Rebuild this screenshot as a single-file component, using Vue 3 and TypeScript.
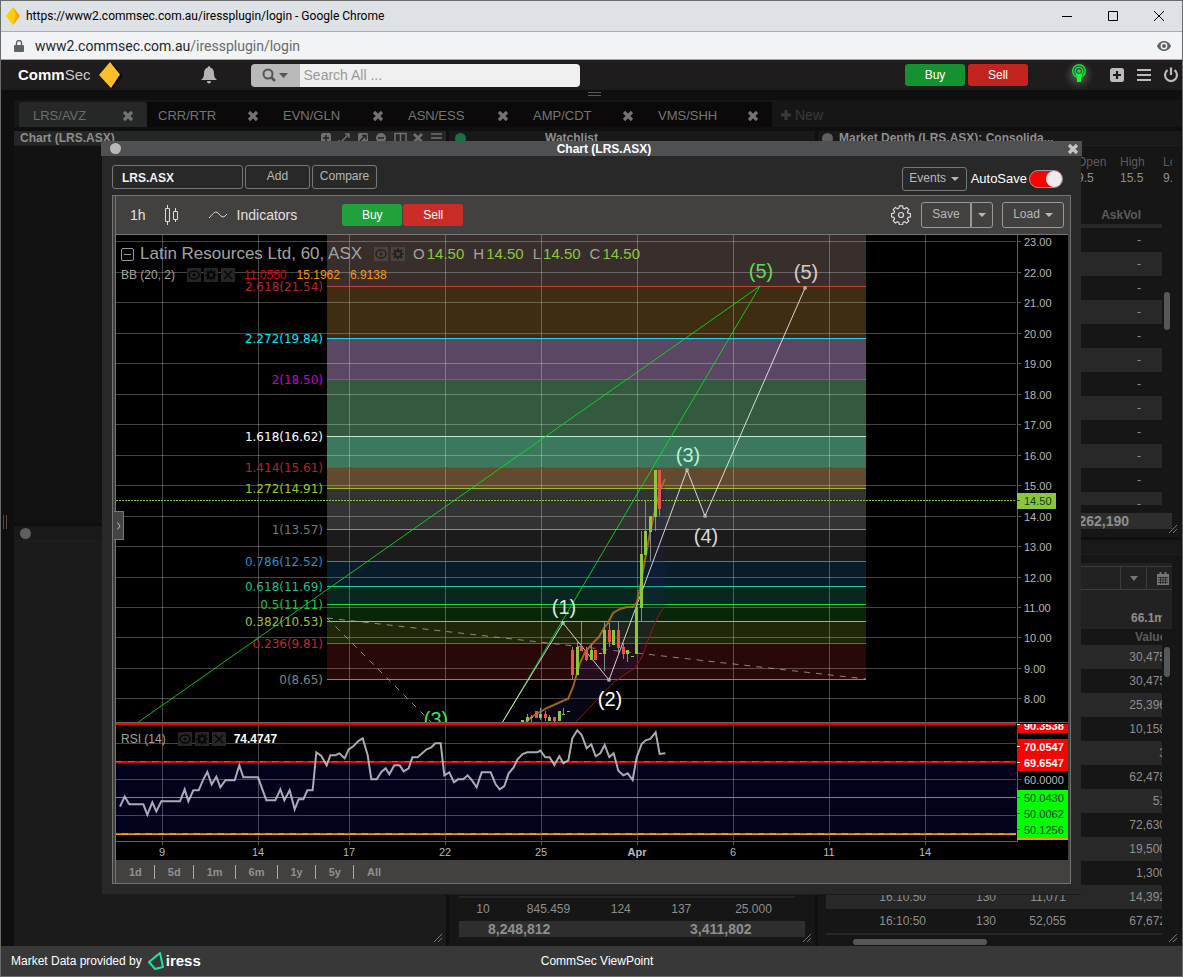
<script setup lang="ts">
import { ref } from 'vue'

interface Level { label: string; y: number; fill: string; line: string; text: string }
interface Candle { x: number; top: number; bottom: number; high: number; low: number; up: boolean }
interface Mark { label: string; x: number; y: number; color: string }

const symbol = ref('LRS.ASX')
const query = ref('')
const autoSave = ref(true)

const tabs = ['LRS/AVZ', 'CRR/RTR', 'EVN/GLN', 'ASN/ESS', 'AMP/CDT', 'VMS/SHH']
const ranges = ['1d', '5d', '1m', '6m', '1y', '5y', 'All']

const depthRows = Array.from({ length: 12 }, () => '-')
const stats = [['Open', '9.5'], ['High', '15.5'], ['Low', '9.5']]
const sales = [
  ['16:10:50', '130', '21,012', '30,475'],
  ['16:10:50', '130', '21,012', '30,475'],
  ['16:10:50', '130', '19,535', '25,396'],
  ['16:10:50', '130', '7,814', '10,158'],
  ['16:10:50', '130', '2', '3'],
  ['16:10:50', '130', '48,060', '62,478'],
  ['16:10:50', '130', '39', '51'],
  ['16:10:50', '130', '55,869', '72,630'],
  ['16:10:50', '130', '15,000', '19,500'],
  ['16:10:50', '130', '1,000', '1,300'],
  ['16:10:50', '130', '11,071', '14,392'],
  ['16:10:50', '130', '52,055', '67,672'],
  ['16:10:50', '130', '1,000', '1,300'],
]
const watchRow = ['10', '845.459', '124', '137', '25.000']
const ohlc = ['O', 'H', 'L', 'C']

const priceTicks = Array.from({ length: 16 }, (_, i) => ({
  label: (23 - i).toFixed(2),
  y: 241 + Math.ceil(30.46 * i),
}))
const dateTicks = [
  { x: 162, label: '9' }, { x: 258, label: '14' }, { x: 349, label: '17' },
  { x: 445, label: '22' }, { x: 541, label: '25' }, { x: 637, label: 'Apr' },
  { x: 733, label: '6' }, { x: 829, label: '11' }, { x: 925, label: '14' },
]
const rsiGrid = [743, 779, 815]

/* Each fill covers the band directly above its level. */
const levels: Level[] = [
  { label: '2.618(21.54)', y: 286, fill: '#382e2b', line: '#cb4238', text: '#b8292b' },
  { label: '2.272(19.84)', y: 338, fill: '#3e2d10', line: '#1ad7ee', text: '#00e8f0' },
  { label: '2(18.50)', y: 379, fill: '#5b4763', line: '#d61fd6', text: '#cc00cc' },
  { label: '1.618(16.62)', y: 436, fill: '#33593f', line: '#b8f0cf', text: '#ffffff' },
  { label: '1.414(15.61)', y: 467, fill: '#3b785e', line: '#b03838', text: '#b22626' },
  { label: '1.272(14.91)', y: 488, fill: '#624a2f', line: '#9bbf22', text: '#98c52c' },
  { label: '1(13.57)', y: 529, fill: '#333333', line: '#8c8c8c', text: '#777777' },
  { label: '0.786(12.52)', y: 561, fill: '#1b1b1b', line: '#2a87c0', text: '#2a8fc4' },
  { label: '0.618(11.69)', y: 586, fill: '#081d29', line: '#22c79a', text: '#23bd92' },
  { label: '0.5(11.11)', y: 604, fill: '#08281f', line: '#27cf3a', text: '#28c636' },
  { label: '0.382(10.53)', y: 621, fill: '#082708', line: '#8fd122', text: '#9ec42c' },
  { label: '0.236(9.81)', y: 643, fill: '#1f2708', line: '#d03a2a', text: '#c02c2c' },
  { label: '0(8.65)', y: 679, fill: '#280908', line: '#8b8080', text: '#808080' },
]
const bandTop = (i: number): number => (i === 0 ? 235 : levels[i - 1].y)

const c = (x: number, top: number, bottom: number, high: number, low: number, up: boolean): Candle =>
  ({ x, top, bottom, high, low, up })
const candles: Candle[] = [
  c(522, 720, 723, 720, 723, true), c(527, 717, 721, 714, 723, true), c(531, 717, 718, 715, 723, true),
  c(536, 711, 718, 711, 718, false), c(540, 714, 718, 708, 720, true), c(545, 714, 718, 711, 721, false),
  c(549, 717, 721, 715, 721, true), c(554, 717, 721, 717, 723, false), c(559, 711, 721, 711, 721, true),
  c(563, 714, 715, 708, 715, true), c(568, 711, 712, 711, 712, true), c(572, 650, 675, 647, 679, false),
  c(577, 647, 675, 641, 675, true), c(581, 647, 651, 622, 651, false), c(586, 650, 660, 647, 661, false),
  c(591, 650, 660, 644, 660, true), c(595, 650, 660, 650, 660, false), c(600, 653, 654, 653, 654, true),
  c(604, 630, 654, 622, 671, true), c(609, 630, 642, 623, 647, false), c(613, 630, 645, 630, 645, true),
  c(618, 630, 648, 622, 653, false), c(623, 647, 654, 643, 659, false), c(627, 650, 654, 650, 662, true),
  c(632, 656, 657, 656, 657, true), c(636, 607, 654, 607, 654, true), c(641, 554, 608, 531, 622, true),
  c(645, 531, 555, 501, 555, true), c(650, 516, 532, 516, 561, true), c(655, 470, 517, 470, 531, true),
  c(659, 470, 509, 470, 516, false),
]
const marks: Mark[] = [
  { label: '(5)', x: 761, y: 278, color: '#62d957' },
  { label: '(5)', x: 806, y: 279, color: '#d6cdca' },
  { label: '(3)', x: 688, y: 462, color: '#b5f2d9' },
  { label: '(4)', x: 706, y: 543, color: '#d8d8d8' },
  { label: '(1)', x: 564, y: 614, color: '#cdeedd' },
  { label: '(2)', x: 610, y: 706, color: '#ffffff' },
  { label: '(3)', x: 436, y: 726, color: '#33ee44' },
]
const knots = [[563, 623], [609, 680], [687, 470], [705, 516], [805, 288]]
const rsiTags = [
  { label: '70.0547', y: 751, cls: 'hot' }, { label: '69.6547', y: 767, cls: 'hot' },
  { label: '60.0000', y: 784, cls: 'axis' }, { label: '50.0430', y: 802, cls: 'cool' },
  { label: '50.0062', y: 818, cls: 'cool' }, { label: '50.1256', y: 834, cls: 'cool' },
]
const rsiPath = '60,710 74,680 88,703 130,703 142,734 157,697 169,724 184,694 240,694 254,658 265,694 280,661 296,661 310,628 322,606 335,643 349,620 361,652 376,631 404,631 418,586 430,622 474,622 499,691 526,691 541,658 553,691 569,661 584,718 596,688 610,688 622,661 638,661 649,547 664,558 680,586 691,556 706,556 718,550 734,565 746,538 760,529 775,513 788,505 803,556 814,628 830,628 844,606 857,595 868,613 883,586 899,586 911,604 926,595 937,562 953,562 980,538 994,532 1006,520 1022,520 1033,616 1048,607 1062,637 1074,628 1090,628 1103,616 1116,631 1130,652 1145,607 1172,607 1187,643 1199,658 1213,648 1226,610 1241,592 1252,569 1268,552 1282,547 1312,547 1321,542 1336,562 1349,562 1363,585 1378,559 1390,580 1405,571 1417,505 1432,481 1445,495 1460,535 1474,523 1487,559 1501,550 1514,525 1528,561 1541,550 1555,602 1570,616 1583,610 1598,630 1610,562 1625,522 1637,511 1651,507 1667,487 1679,552 1696,550'
</script>

<template>
  <div class="window">
    <div class="titlebar">
      <svg class="favicon" viewBox="0 0 16 18"><path d="M8 0 15 9 8 18 1 9z" fill="#f9d100" /><path d="M8 0 15 9 8 18 11 8z" fill="#f5a800" /></svg>
      <span class="caption">https://www2.commsec.com.au/iressplugin/login - Google Chrome</span>
      <button class="winbtn" aria-label="Minimise"><svg viewBox="0 0 12 12"><path d="M1 6.5h10" stroke="#000" /></svg></button>
      <button class="winbtn" aria-label="Maximise"><svg viewBox="0 0 12 12"><path d="M1.500 1.500h9v9h-9z" fill="none" stroke="#000" /></svg></button>
      <button class="winbtn" aria-label="Close window"><svg viewBox="0 0 12 12"><path d="M1 1l10 10M11 1 1 11" stroke="#000" /></svg></button>
    </div>
    <div class="address">
      <svg class="lock" viewBox="0 0 10 12"><path d="M1 5h8q1 0 1 1v5q0 1-1 1H1q-1 0-1-1V6q0-1 1-1z" fill="#5f6368" /><path d="M2.500 5V3a2.500 2.500 0 0 1 5 0v2" fill="none" stroke="#5f6368" stroke-width="1.400" /></svg>
      <span class="url">www2.commsec.com.au<i>/iressplugin/login</i></span>
      <svg class="eye" viewBox="0 0 14 12"><path d="M7 1C3.500 1 1 3.500 0 6c1 2.500 3.500 5 7 5s6-2.500 7-5c-1-2.500-3.500-5-7-5z" fill="#5f6368" /><circle cx="7" cy="6" r="3.400" fill="#f1f3f4" /><circle cx="7" cy="6" r="2" fill="#5f6368" /></svg>
    </div>

    <header class="appbar">
      <span class="brand"><b>Comm</b>Sec</span>
      <svg class="diamond" viewBox="0 0 24 28"><path d="M14 3 24 15 14 28 6 16z" fill="#0c0a0a" /><path d="M11 1 21 13.500 12 27 0 14z" fill="#fdbe2c" /></svg>
      <button class="icon bell" aria-label="Alerts"><svg viewBox="0 0 16 18"><path d="M8 0q1.200 0 1.200 1.600C12 2.400 13 4.500 13 7.500c0 3.500 1 5 3 6.500H0c2-1.500 3-3 3-6.500 0-3 1-5.100 3.800-5.900Q6.800 0 8 0zM6 15h4q0 2.500-2 2.500T6 15z" fill="#b4b4b4" /></svg></button>
      <div class="search">
        <button class="scope" aria-label="Search scope">
          <svg viewBox="0 0 26 14"><circle cx="6" cy="6" r="4.500" fill="none" stroke="#555" stroke-width="2" /><path d="M9 9l4 4" stroke="#555" stroke-width="2.500" /><path d="M17 5h9l-4.500 5z" fill="#555" /></svg>
        </button>
        <input v-model="query" aria-label="Search all" placeholder="Search All ..." />
      </div>
      <div class="trade">
        <button class="buy">Buy</button><button class="sell">Sell</button>
      </div>
      <svg class="bulb" viewBox="0 0 30 30"><defs><radialGradient id="glow"><stop offset="0" stop-color="#777" stop-opacity=".8" /><stop offset="1" stop-color="#555" stop-opacity="0" /></radialGradient></defs><circle cx="15" cy="15" r="15" fill="url(#glow)" /><g fill="none" stroke="#08e838"><circle cx="15" cy="11" r="6.300" stroke-width="1.500" /><circle cx="15" cy="11" r="3.800" stroke-width="1.500" /></g><circle cx="15" cy="11" r="1.800" fill="#08e838" /><path d="M12 14h6l-1 5v3h-4v-3z" fill="#08ff38" /></svg>
      <button class="icon" aria-label="Add widget"><svg viewBox="0 0 16 16"><rect x="1" y="1" width="14" height="14" rx="2.500" fill="#bcbcbc" /><path d="M8 4v8M4 8h8" stroke="#1f1c1d" stroke-width="2.200" /></svg></button>
      <button class="icon" aria-label="Menu"><svg viewBox="0 0 16 16"><path d="M1 3h14M1 8h14M1 13h14" stroke="#bcbcbc" stroke-width="2" /></svg></button>
      <button class="icon" aria-label="Log out"><svg viewBox="0 0 16 16"><path d="M4.500 3.200a6 6 0 1 0 7 0M8 0.500v7.500" fill="none" stroke="#bcbcbc" stroke-width="2.200" /></svg></button>
    </header>

    <main class="workspace">
      <div class="grip"></div>
      <nav class="tabs">
        <div v-for="(tab, i) in tabs" :key="tab" class="tab" :class="{ active: i === 0 }">
          <a href="#">{{ tab }}</a>
          <button class="cross" :aria-label="'Close ' + tab"><svg viewBox="0 0 12 12"><path d="M2 2l8 8M10 2l-8 8" stroke="#737373" stroke-width="3.200" /></svg></button>
        </div>
        <button class="new"><svg viewBox="0 0 12 12"><path d="M6 1v10M1 6h10" stroke="#3a3a3a" stroke-width="3" /></svg>New</button>
      </nav>

      <div class="columns">
        <div class="column left">
          <section class="panel">
            <header class="bar lit">
              <h2>Chart (LRS.ASX)</h2>
              <svg class="tools" viewBox="0 0 122 12" fill="none" stroke="#707070" stroke-width="1.500">
                <rect x="1" y="1" width="10" height="10" rx="2" fill="#707070" stroke="none" /><path d="M6 3v6M3 6h6" stroke="#222" />
                <path d="M20 11l8-8M25 2h4v4M19 8v4h4" /><rect x="38" y="1" width="10" height="10" rx="2" fill="#707070" stroke="none" /><path d="M40 9l5-5M42 3.500h4v4" stroke="#222" />
                <circle cx="61" cy="6" r="5" fill="#707070" stroke="none" /><path d="M58 6h6" stroke="#222" /><path d="M75 1.500h11v10H75zM80.500 1v11" /><path d="M94 2l8 8M102 2l-8 8" stroke-width="2.500" /><path d="M111 2h11M111 6h11M111 10h11" />
              </svg>
            </header>
          </section>
          <section class="panel lower">
            <header class="bar"><span class="dot"></span></header>
            <svg class="resize" viewBox="0 0 10 10"><path d="M1 9l8-8M5 9l4-4" /></svg>
          </section>
        </div>

        <section class="panel watch">
          <header class="bar"><span class="dot green"></span><h2>Watchlist</h2></header>
          <div class="fill"></div>
          <table class="watch-table"><tbody><tr><td v-for="v in watchRow" :key="v">{{ v }}</td></tr></tbody></table>
          <div class="totals"><b>8,248,812</b><b>3,411,802</b></div>
          <svg class="resize" viewBox="0 0 10 10"><path d="M1 9l8-8M5 9l4-4" /></svg>
        </section>

        <div class="column right">
          <section class="panel depth">
            <header class="bar"><span class="dot"></span><h2>Market Depth (LRS.ASX): Consolida...</h2></header>
            <dl class="stats"><div v-for="s in stats" :key="s[0]"><dt>{{ s[0] }}</dt><dd>{{ s[1] }}</dd></div></dl>
            <div class="ask">AskVol</div>
            <div class="scroll">
              <table class="depth-table"><tbody>
                <tr class="sliver"><td></td></tr>
                <tr v-for="(v, i) in depthRows" :key="i"><td>{{ v }}</td></tr>
              </tbody></table>
              <span class="thumb"></span>
            </div>
            <div class="depth-total">262,190</div>
            <svg class="resize" viewBox="0 0 10 10"><path d="M1 9l8-8M5 9l4-4" /></svg>
          </section>
          <section class="panel course">
            <header class="bar"></header>
            <div class="filter">
              <div class="field">
                <button aria-label="Choose filter"><svg viewBox="0 0 8 5"><path d="M0 0h8L4 5z" fill="#777" /></svg></button>
                <button aria-label="Choose date"><svg class="cal" viewBox="0 0 12 13"><path d="M0 2h12v11H0z" fill="#777" /><path d="M1 5.500h10M1 8h10M1 10.500h10M3.500 5v7M6 5v7M8.500 5v7" stroke="#222" stroke-width=".8" /><path d="M3.500 0v3M8.500 0v3" stroke="#777" stroke-width="2" /></svg></button>
              </div>
              <b>66.1m</b>
            </div>
            <div class="value-head">Value</div>
            <div class="scroll">
              <table class="sales"><tbody><tr v-for="(row, i) in sales" :key="i"><td v-for="(v, j) in row" :key="j">{{ v }}</td></tr></tbody></table>
            </div>
            <span class="thumb vertical"></span><span class="thumb horizontal"></span>
            <svg class="resize" viewBox="0 0 10 10"><path d="M1 9l8-8M5 9l4-4" /></svg>
          </section>
        </div>
      </div>
      <div class="side-grip"></div>

      <section class="dialog" role="dialog" aria-label="Chart (LRS.ASX)">
        <header class="dialog-bar">
          <span class="pin"><span class="dot bright"></span></span>
          <h1>Chart (LRS.ASX)</h1>
          <button class="cross" aria-label="Close chart"><svg viewBox="0 0 12 12"><path d="M2 2l8 8M10 2l-8 8" stroke="#c4c4c4" stroke-width="3.200" /></svg></button>
        </header>
        <div class="controls">
          <input v-model="symbol" class="symbol" aria-label="Security code" />
          <button class="line-btn">Add</button>
          <button class="line-btn">Compare</button>
          <span class="fill"></span>
          <button class="line-btn events">Events <i class="caret"></i></button>
          <label class="auto">AutoSave<input v-model="autoSave" type="checkbox" /><span class="switch"></span></label>
        </div>

        <div class="chart-frame">
          <div class="toolbar">
            <button class="plain">1h</button>
            <button class="plain candle" aria-label="Chart style"><svg viewBox="0 0 16 20" fill="none" stroke="#dcdcdc"><path d="M1.500 3.500h4v13h-4zM3.500 0v3.500M3.500 16.500V20M9.500 6.500h4v8h-4zM11.500 3v3.500M11.500 14.500V17" /></svg></button>
            <button class="plain indicators"><svg viewBox="0 0 20 8"><path d="M1 7C4 4 6 1 8 1c3 0 4 5 7 5 1.500 0 2.500-1.500 4-3" fill="none" stroke="#dcdcdc" /></svg>Indicators</button>
            <div class="trade inner"><button class="buy">Buy</button><button class="sell">Sell</button></div>
            <span class="fill"></span>
            <button class="plain gear" aria-label="Settings"><svg viewBox="0 0 20 20" fill="none" stroke="#dcdcdc" stroke-width="1.200"><path d="M8.400.8h3.200l.5 2.500 1.400.6 2.100-1.400 2.200 2.200-1.400 2.100.6 1.400 2.500.5v3.200l-2.500.5-.6 1.400 1.400 2.100-2.200 2.200-2.100-1.400-1.400.6-.5 2.500H8.400l-.5-2.500-1.400-.6-2.100 1.400-2.200-2.200 1.400-2.100-.6-1.400-2.500-.5V8.600l2.500-.5.6-1.400-1.400-2.100 2.200-2.200 2.100 1.400 1.400-.6z" stroke-linejoin="round" /><circle cx="10" cy="10" r="2.500" /></svg></button>
            <button class="line-btn save">Save</button><button class="line-btn drop" aria-label="Save options"><i class="caret"></i></button>
            <button class="line-btn load">Load <i class="caret"></i></button>
          </div>

          <div class="plot">
            <svg class="canvas" viewBox="116 235 952 625">
              <defs><clipPath id="pane"><rect x="116" y="235" width="901" height="488" /></clipPath><clipPath id="tagclip"><rect x="1017" y="724" width="51" height="20" /></clipPath></defs>
              <rect v-for="(l, i) in levels" :key="'b' + l.y" x="327" :y="bandTop(i)" width="539" :height="l.y - bandTop(i)" :fill="l.fill" />
              <rect x="116" y="762" width="901" height="71" fill="#02021c" />
              <g stroke="#fff" stroke-opacity=".27">
                <path v-for="t in priceTicks" :key="t.y" :d="`M116 ${t.y + 0.5}H1016`" />
                <path v-for="y in rsiGrid" :key="y" :d="`M116 ${y + 0.5}H1016`" />
                <path v-for="t in dateTicks" :key="t.x" :d="`M${t.x + 0.5} 235V840`" />
              </g>
              <g v-for="l in levels" :key="l.label"><path :d="`M327 ${l.y + 0.5}H866`" :stroke="l.line" /><text class="fib" x="323" :y="l.y + 5" :fill="l.text">{{ l.label }}</text></g>
              <path d="M116 500.500H1016" stroke="#8cc63f" stroke-dasharray="2 1" />

              <g clip-path="url(#pane)" fill="none">
                <g stroke="#b9a8a8" stroke-opacity=".75" stroke-dasharray="6 6"><path d="M327 618 866 679" /><path d="M327 618 432 723" /></g>
                <path d="M520 723 533 716 547 708 565 700 568 699 573 687 577 673 580 663 585 652 593 643 599 637 604 628 608 623 613 613 620 609 627 607 633 607 637 602 640 588 645 560 650 533 655 510 660 490 665 479V606L655 623 647 643 642 657 635 668 613 683 575 723z" fill="#1c1c6a" fill-opacity=".2" />
                <path d="M137 723 760 286 502 723" stroke="#0be31f" stroke-opacity=".85" />
                <path d="M502 723 563 623 609 680 687 470 705 516 805 288" stroke="#fff" stroke-opacity=".8" />
                <path d="M525 723 533 716 547 708 565 700 568 699 573 687 577 673 580 663 585 652 593 643 599 637 604 628 608 623 613 613 620 609 627 607 633 607 637 602 640 588 645 560 650 533 655 510 660 490 665 479" stroke="#b5741a" stroke-width="2" stroke-opacity=".85" />
                <path d="M575 723 613 683 627 673 635 668 642 657 647 643 655 623 660 613 665 606" stroke="#8c1a1a" />
                <g v-for="k in candles" :key="k.x"><path :d="`M${k.x + 0.5} ${k.high}V${k.low}`" stroke="#8a8a8a" /><rect :x="k.x - 1" :y="k.top" width="3" :height="k.bottom - k.top" :fill="k.up ? '#8cc63f' : '#f0504a'" /></g>
                <rect v-for="k in knots" :key="k[0]" :x="k[0] - 1" :y="k[1] - 1" width="2" height="2" stroke="#ddd" fill="#222" />
                <text v-for="m in marks" :key="m.x" class="wave" :x="m.x" :y="m.y" :fill="m.color">{{ m.label }}</text>
              </g>

              <path d="M116 722.500H1068" stroke="#666" />
              <path d="M116 724H1016" stroke="#f00" stroke-width="2" />
              <path d="M116 762H1016" stroke="#f00018" stroke-width="2" />
              <path d="M116 761.500H1016" stroke="#777" stroke-dasharray="6 6" />
              <path d="M116 797.500H1016" stroke="#10d020" />
              <path d="M116 834H1016" stroke="#ff9800" stroke-width="2" />
              <path d="M116 833.500H1016" stroke="#777" stroke-dasharray="6 6" />
              <g transform="translate(100 570) scale(.33333)"><polyline :points="rsiPath" fill="none" stroke="#c8c8d4" stroke-opacity=".85" stroke-width="6" /></g>

              <g stroke="#5c5c5c"><path d="M116 841.500H1018M1017.500 235V841" /><path v-for="t in priceTicks" :key="t.y" :d="`M1018 ${t.y + 0.5}h3`" /><path d="M1018 779.500h3" /><path v-for="t in dateTicks" :key="t.x" :d="`M${t.x + 0.5} 842v3`" /></g>
              <text v-for="t in priceTicks" :key="t.label" class="axis" x="1024" :y="t.y + 5">{{ t.label }}</text>
              <text v-for="t in dateTicks" :key="t.x" class="axis date" :class="{ month: t.label === 'Apr' }" :x="t.x" y="856">{{ t.label }}</text>
              <rect x="1017" y="493" width="39" height="16" fill="#8cc63f" /><text class="cool" x="1024" y="505">14.50</text>
              <g clip-path="url(#tagclip)"><rect x="1017" y="724" width="51" height="9" fill="#f00" /><text class="hot" x="1024" y="730">90.3538</text></g>
              <rect x="1017" y="739" width="51" height="32" fill="#f00" /><rect x="1017" y="790" width="51" height="48" fill="#0f0" /><rect x="1017" y="838" width="51" height="2" fill="#ff9800" />
              <path d="M1017 724.500h3M1017 746.500h3M1017 762.500h3" stroke="#fff" /><path d="M1017 500.500h3M1017 797.500h3M1017 813.500h3M1017 829.500h3" stroke="#063" />
              <text v-for="t in rsiTags" :key="t.label" :class="t.cls" x="1024" :y="t.y">{{ t.label }}</text>
            </svg>

            <div class="legend title">
              <button class="fold" aria-label="Collapse legend"></button>
              <span>Latin Resources Ltd, 60, ASX</span>
              <svg class="badges" viewBox="0 0 31 14"><rect width="14" height="14" /><rect x="17" width="14" height="14" /><use href="#g-eye" /><use href="#g-gear" x="17" /></svg>
              <span v-for="o in ohlc" :key="o" class="quote">{{ o }}<em>14.50</em></span>
            </div>
            <div class="legend study">
              <span>BB (20, 2)</span>
              <svg class="badges three" viewBox="0 0 48 14">
                <defs><g id="g-eye"><ellipse cx="7" cy="7" rx="5" ry="4" fill="none" stroke="currentColor" stroke-width="1.500" /><circle cx="7" cy="7" r="1.500" fill="currentColor" /></g><g id="g-gear"><circle cx="7" cy="7" r="3" fill="none" stroke="currentColor" stroke-width="2" /><path d="M7 1.500v2M7 10.500v2M1.500 7h2M10.500 7h2M3 3l1.500 1.500M9.500 9.500 11 11M11 3 9.500 4.500M4.500 9.500 3 11" stroke="currentColor" stroke-width="2" /></g></defs>
                <rect width="14" height="14" /><rect x="17" width="14" height="14" /><rect x="34" width="14" height="14" /><use href="#g-eye" /><use href="#g-gear" x="17" /><path d="M37 3l8 8M45 3l-8 8" stroke="currentColor" stroke-width="1.500" />
              </svg>
              <span class="v red">11.0550</span><span class="v orange">15.1962</span><span class="v orange">6.9138</span>
            </div>
            <div class="legend rsi">
              <span>RSI (14)</span>
              <svg class="badges three" viewBox="0 0 48 14"><rect width="14" height="14" /><rect x="17" width="14" height="14" /><rect x="34" width="14" height="14" /><use href="#g-eye" /><use href="#g-gear" x="17" /><path d="M37 3l8 8M45 3l-8 8" stroke="currentColor" stroke-width="1.500" /></svg>
              <b>74.4747</b>
            </div>
            <button class="drawer" aria-label="Show drawing tools"><svg viewBox="0 0 4 8"><path d="M.5.500 3 4 .500 7.500" fill="none" stroke="#bbb" /></svg></button>
          </div>
          <div class="ranges"><button v-for="r in ranges" :key="r">{{ r }}</button></div>
        </div>
      </section>
    </main>

    <footer class="footer">
      <span>Market Data provided by</span>
      <svg class="mark" viewBox="0 0 16 18"><path d="M12 1 1 10l6 7 8-2z" fill="none" stroke="#1fe59a" stroke-width="2" stroke-linejoin="round" /></svg>
      <strong>iress</strong>
      <span class="product">CommSec ViewPoint</span>
    </footer>
  </div>
</template>

<style>
html, body { margin: 0; background: #111; }
</style>

<style scoped>
* { box-sizing: border-box; }
.window { height: 100vh; min-height: 700px; display: flex; flex-direction: column; border: 1px solid #6b6b6b; font: 12px/16px "Liberation Sans", Arial, sans-serif; color: #8e8e8e; background: #111; overflow: hidden; }
button { border: 0; padding: 0; margin: 0; background: none; color: inherit; font: inherit; cursor: pointer; }
input { font: inherit; outline: none; }
svg { display: block; flex: none; }
h1, h2 { margin: 0; font-size: 12px; line-height: 14px; font-weight: bold; white-space: nowrap; }
a { color: inherit; text-decoration: none; }
.fill { flex: 1; }

.titlebar { flex: none; height: 31px; display: flex; align-items: center; padding: 0 6px 0 4px; background: #dee1e6; border-bottom: 1px solid #a9acb0; color: #000; }
.favicon { width: 16px; height: 18px; margin-right: 5px; }
.caption { flex: 1; font: 12px/18px Roboto, "Noto Sans", sans-serif; white-space: nowrap; overflow: hidden; }
.winbtn { width: 46px; height: 30px; display: flex; align-items: center; justify-content: center; }
.winbtn svg { width: 12px; height: 12px; }
.winbtn:last-child { width: 34px; margin-left: 6px; }
.address { flex: none; height: 28px; display: flex; align-items: center; padding: 0 11px 0 13px; background: #f1f3f4; border-bottom: 1px solid #a5a5a5; }
.lock { width: 10px; height: 12px; margin-right: 11px; }
.url { flex: 1; font: 14px/18px Roboto, "Noto Sans", sans-serif; color: #24272b; }
.url i { font-style: normal; color: #686c70; }
.eye { width: 14px; height: 12px; }

.appbar { flex: none; height: 30px; display: flex; align-items: center; padding: 0 3px 0 17px; background: #1f1c1d; }
.brand { font-size: 15px; color: #c8c8c8; }
.brand b { color: #fff; }
.diamond { width: 24px; height: 28px; margin: 0 78px 0 8px; }
.icon { width: 16px; height: 18px; display: flex; align-items: center; }
.icon svg { width: 16px; height: 16px; }
.bell svg { height: 18px; }
.search { flex: 0 1 329px; height: 23px; margin-left: 34px; display: flex; border-radius: 4px; overflow: hidden; }
.scope { flex: none; width: 49px; background: #b9b9b9; display: flex; align-items: center; justify-content: center; }
.scope svg { width: 26px; height: 14px; }
.search input { flex: 1; min-width: 0; border: 0; padding: 0 4px; background: #f0f0f0; font-size: 14px; color: #333; }
.search input::placeholder { color: #999; opacity: 1; }
.trade { display: flex; gap: 3px; margin-left: auto; }
.trade button { width: 60px; height: 22px; border-radius: 3px; color: #fff; font-size: 12px; }
.trade .buy { background: #149130; }
.trade .sell { background: #c3241f; }
.bulb { width: 30px; height: 30px; margin: 0 19px 0 36px; }
.appbar > .icon:nth-last-child(-n+3) { margin-left: 11px; }
.appbar > .icon:nth-last-child(3) { margin-left: -4px; }

.workspace { flex: 1; min-height: 0; position: relative; display: flex; flex-direction: column; padding: 0 1px 0 13px; background: #0f0f0f; }
.grip { flex: none; align-self: center; width: 13px; height: 4px; margin: 2px 6px 4px 0; border: solid #5a5a5a; border-width: 1px 0; }
.tabs { flex: none; display: flex; height: 27px; padding: 2px 0 0 5px; background: #161616; font-size: 13px; color: #757575; overflow: hidden; margin-bottom: 4px; }
.tab { flex: none; width: 125px; display: flex; align-items: center; justify-content: space-between; padding: 3px 13px 0 11px; background: #0c090a; }
.tab.active { width: 128px; padding-left: 14px; background: #252827; border-radius: 3px 3px 0 0; color: #6c6c6c; }
.cross svg { width: 12px; height: 12px; }
.new { display: flex; align-items: center; gap: 3px; margin-left: 8px; font-size: 14px; color: #3a3a3a; }
.new svg { width: 12px; height: 12px; }

.columns { flex: 1; min-height: 0; display: grid; grid-template-columns: 432fr 366fr 363fr; gap: 3px; }
.column { min-width: 0; min-height: 0; display: grid; gap: 3px; }
.left { grid-template-rows: 392fr 420fr; }
.right { grid-template-rows: minmax(0, 1fr) minmax(0, 1fr); }
.panel { position: relative; min-width: 0; min-height: 0; display: flex; flex-direction: column; background: #161616; overflow: hidden; }
.left .panel { background: #121212; }
.left .lower { background: #1b1b1b; }
.bar { flex: none; height: 15px; display: flex; align-items: center; justify-content: space-between; padding: 0 6px; border-bottom: 1px solid #1f1f1f; background: #191919; }
.bar.lit { padding-right: 4px; background: #252727; }
.tools { width: 122px; height: 12px; }
.dot { flex: none; width: 11px; height: 11px; border-radius: 50%; background: #5f5f5f; }
.green { background: #157441; }
.bright { background: #b9b9b9; }
.watch h2 { flex: 1; text-align: center; padding-right: 132px; }
.depth .bar { justify-content: flex-start; gap: 6px; padding-left: 4px; }
.resize { position: absolute; right: 3px; bottom: 3px; width: 10px; height: 10px; stroke: #777; fill: none; }

.watch-table { margin: 0 20px 0 10px; border-collapse: collapse; table-layout: fixed; border-top: 2px solid #262626; }
.watch-table td { height: 24px; padding: 0 0 2px 1px; text-align: center; }
.watch-table td:nth-child(odd) { width: 18%; }
.watch-table td:first-child { width: 14%; }
.watch-table td:nth-child(2), .watch-table td:last-child { width: 25%; }
.totals { display: flex; height: 16px; margin: 0 10px 9px; background: #2e2e2e; font-size: 14px; }
.totals b { flex: none; width: 202px; padding-left: 29px; }
.totals b:last-child { width: auto; }

.stats { flex: none; height: 58px; display: flex; justify-content: flex-end; margin: 0 9px 0 8px; padding-top: 8px; overflow: hidden; }
.stats div { flex: none; width: 43px; }
.stats div:last-child { width: 9px; overflow: hidden; }
.stats dt { color: #5c5c5c; }
.stats dd { margin: 0; }
.ask { flex: none; height: 20px; padding: 3px 40px 0 0; text-align: right; font-weight: bold; color: #5c5c5c; }
.scroll { position: relative; flex: 1; min-height: 0; overflow: hidden; margin: 0 19px 0 8px; }
.depth .scroll { margin-right: 0; padding-right: 19px; }
table { border-spacing: 0; }
.depth-table { width: 100%; }
.depth-table td { height: 24px; padding: 0 21px 0 0; text-align: right; }
.depth-table .sliver td { height: 4px; font-size: 0; line-height: 0; }
.depth-table tr:nth-child(odd) { background: #282828; }
.thumb { position: absolute; right: 11px; top: 68px; width: 6px; height: 38px; border-radius: 3px; background: #565758; }
.thumb.vertical { top: 107px; height: 30px; }
.thumb.horizontal { top: auto; right: auto; bottom: 1px; left: 35px; width: 134px; height: 6px; }
.depth-total { flex: none; height: 16px; margin: 8px 9px 8px 8px; padding-right: 43px; text-align: right; font-size: 14px; font-weight: bold; background: #2e2e2e; }
.filter { flex: none; height: 66px; margin: 8px 9px 0 8px; padding-top: 3px; background: #222; overflow: hidden; }
.field { height: 24px; display: flex; justify-content: flex-end; border: solid #3c3c3c; border-width: 1px 0; }
.field button { width: 26px; display: flex; justify-content: center; align-items: center; border-left: 1px solid #3c3c3c; }
.field button + button { padding-left: 6px; }
.field svg { width: 8px; height: 5px; }
.field svg.cal { width: 12px; height: 13px; }
.filter b { display: block; height: 16px; margin: 20px 10px 0 auto; width: 31px; overflow: hidden; }
.value-head { flex: none; width: 27px; height: 16px; margin: 0 19px 0 auto; overflow: hidden; font-weight: bold; color: #5c5c5c; }
.course .scroll { margin-bottom: 11px; }
.sales { width: calc(100% + 4px); table-layout: fixed; }
.sales td { height: 24px; padding: 0; text-align: right; }
.sales td:nth-child(2), .sales td:nth-child(3) { width: 70px; }
.sales tr:nth-child(odd) { background: #282828; }
.side-grip { position: absolute; left: 2px; top: 425px; width: 4px; height: 14px; border: solid #5c4a35; border-width: 0 1px; }

.dialog { position: absolute; top: 51px; right: 101px; bottom: 51px; left: 101px; display: flex; flex-direction: column; background: #282828; border-bottom: 1px solid #1c1c1c; }
.dialog-bar { flex: none; height: 15px; display: flex; align-items: center; background: #4f5052; color: #fff; margin: 0 -1px; }
.pin { width: 40px; padding-left: 9px; }
.pin .dot { display: block; }
.dialog-bar h1 { flex: 1; text-align: center; }
.dialog-bar .cross { width: 15px; }
.controls { flex: none; height: 39px; display: flex; align-items: flex-start; padding: 9px 18px 0 10px; color: #b8b8b8; }
.symbol { width: 131px; height: 24px; margin-right: 2px; padding: 1px 9px 0; background: none; border: 1px solid #777; border-radius: 3px; color: #f0f0f0; font-weight: bold; }
.line-btn { height: 24px; border: 1px solid #777; border-radius: 3px; color: #b8b8b8; padding-bottom: 2px; display: flex; align-items: center; justify-content: center; gap: 5px; }
.controls .line-btn { width: 65px; margin-right: 2px; }
.controls .events { margin: 2px 4px 0 0; }
.caret { border: 4px solid transparent; border-top: 4px solid #b8b8b8; border-bottom: 0; margin-top: 2px; }
.auto { display: flex; align-items: center; height: 24px; margin-top: 2px; font-size: 13px; color: #fff; position: relative; }
.auto input { position: absolute; right: 0; width: 34px; height: 18px; margin: 0; opacity: 0; }
.switch { width: 34px; height: 18px; margin-left: 2px; padding: 0 0 0 16px; border: 1px solid #999; border-radius: 9px; background: #aaa; }
.switch::after { content: ""; display: block; width: 16px; height: 16px; border-radius: 50%; background: #ececec; }
input:checked + .switch { background: #f00; }

.chart-frame { flex: 1; min-height: 0; display: flex; flex-direction: column; margin: 0 10px 10px; border: 1px solid #737373; padding: 0 2px 0 3px; background: #434140; }
.toolbar { flex: none; height: 39px; display: flex; align-items: center; padding: 0 4px 0 14px; margin-left: -1px; border-left: 1px solid #737373; border-bottom: 1px solid #777; color: #e0e0e0; }
.plain { display: flex; align-items: center; font-size: 14px; }
.candle { margin-left: 18px; }
.candle svg { width: 16px; height: 20px; }
.indicators { margin-left: 28px; gap: 9px; }
.indicators svg { width: 20px; height: 8px; }
.trade.inner { gap: 1px; margin-left: 45px; }
.inner .buy { background: #22a03a; }
.inner .sell { background: #cb2c28; }
.gear { margin-right: 10px; }
.gear svg { width: 20px; height: 20px; }
.toolbar .line-btn { height: 26px; border-color: #999; }
.toolbar .save { width: 50px; border-radius: 3px 0 0 3px; }
.toolbar .drop { width: 22px; border-radius: 0 3px 3px 0; }
.toolbar .load { width: 62px; margin-left: 9px; }

.plot { position: relative; flex: 1; min-height: 0; margin-left: -1px; border-left: 1px solid #737373; background: #000; }
.canvas { width: 100%; height: 100%; }
.fib { font: 12px "DejaVu Sans", sans-serif; text-anchor: end; }
.wave { font-size: 20px; text-anchor: middle; }
.axis, .cool, .hot { font-size: 11px; fill: #b8b8b8; }
.cool { fill: #123c12; }
.hot { fill: #fff; font-weight: bold; }
.date { text-anchor: middle; }
.month { font-weight: bold; }
.legend { position: absolute; left: 5px; display: flex; align-items: center; color: #a3a3a3; white-space: nowrap; }
.title { top: 9px; height: 20px; font-size: 17px; }
.study { top: 32px; }
.rsi { top: 496px; }
.rsi b { color: #fff; margin-left: 8px; }
.fold { width: 13px; height: 13px; margin-right: 6px; border: 1px solid #999; border-radius: 2px; padding: 0 2px; }
.fold::after { content: ""; display: block; height: 1px; background: #999; }
.badges { width: 31px; height: 14px; margin: 0 8px 0 12px; color: #26211f; }
.badges rect { fill: #4a4441; }
.three { width: 48px; margin-right: 0; color: #080808; }
.three rect { fill: #262626; }
.quote { display: flex; gap: 2px; margin-right: 9px; font-size: 15px; }
.quote em { font-style: normal; color: #8cc63f; }
.v { margin-left: 10px; }
.v.red { color: #e00000; margin-left: 9px; }
.v.orange { color: #ff9800; }
.drawer { position: absolute; left: -2px; top: 276px; width: 10px; height: 29px; display: flex; align-items: center; justify-content: center; background: #454443; border: 1px solid #777; border-left: 0; }
.drawer svg { width: 4px; height: 8px; }
.ranges { flex: none; height: 23px; display: flex; align-items: center; margin-left: -1px; border-left: 1px solid #737373; color: #909090; }
.ranges button { height: 14px; padding: 0 12px 0 13px; border-right: 1px solid #aaa; font-size: 11px; line-height: 14px; font-weight: bold; }
.ranges button:last-child { border-right: 0; }

.footer { flex: none; height: 30px; position: relative; display: flex; align-items: center; padding-left: 10px; background: #383838; color: #fff; }
.mark { width: 16px; height: 18px; margin: 0 2px 0 6px; }
.footer strong { font-size: 15px; }
.product { position: absolute; left: 0; right: 0; text-align: center; padding-left: 11px; }
</style>
